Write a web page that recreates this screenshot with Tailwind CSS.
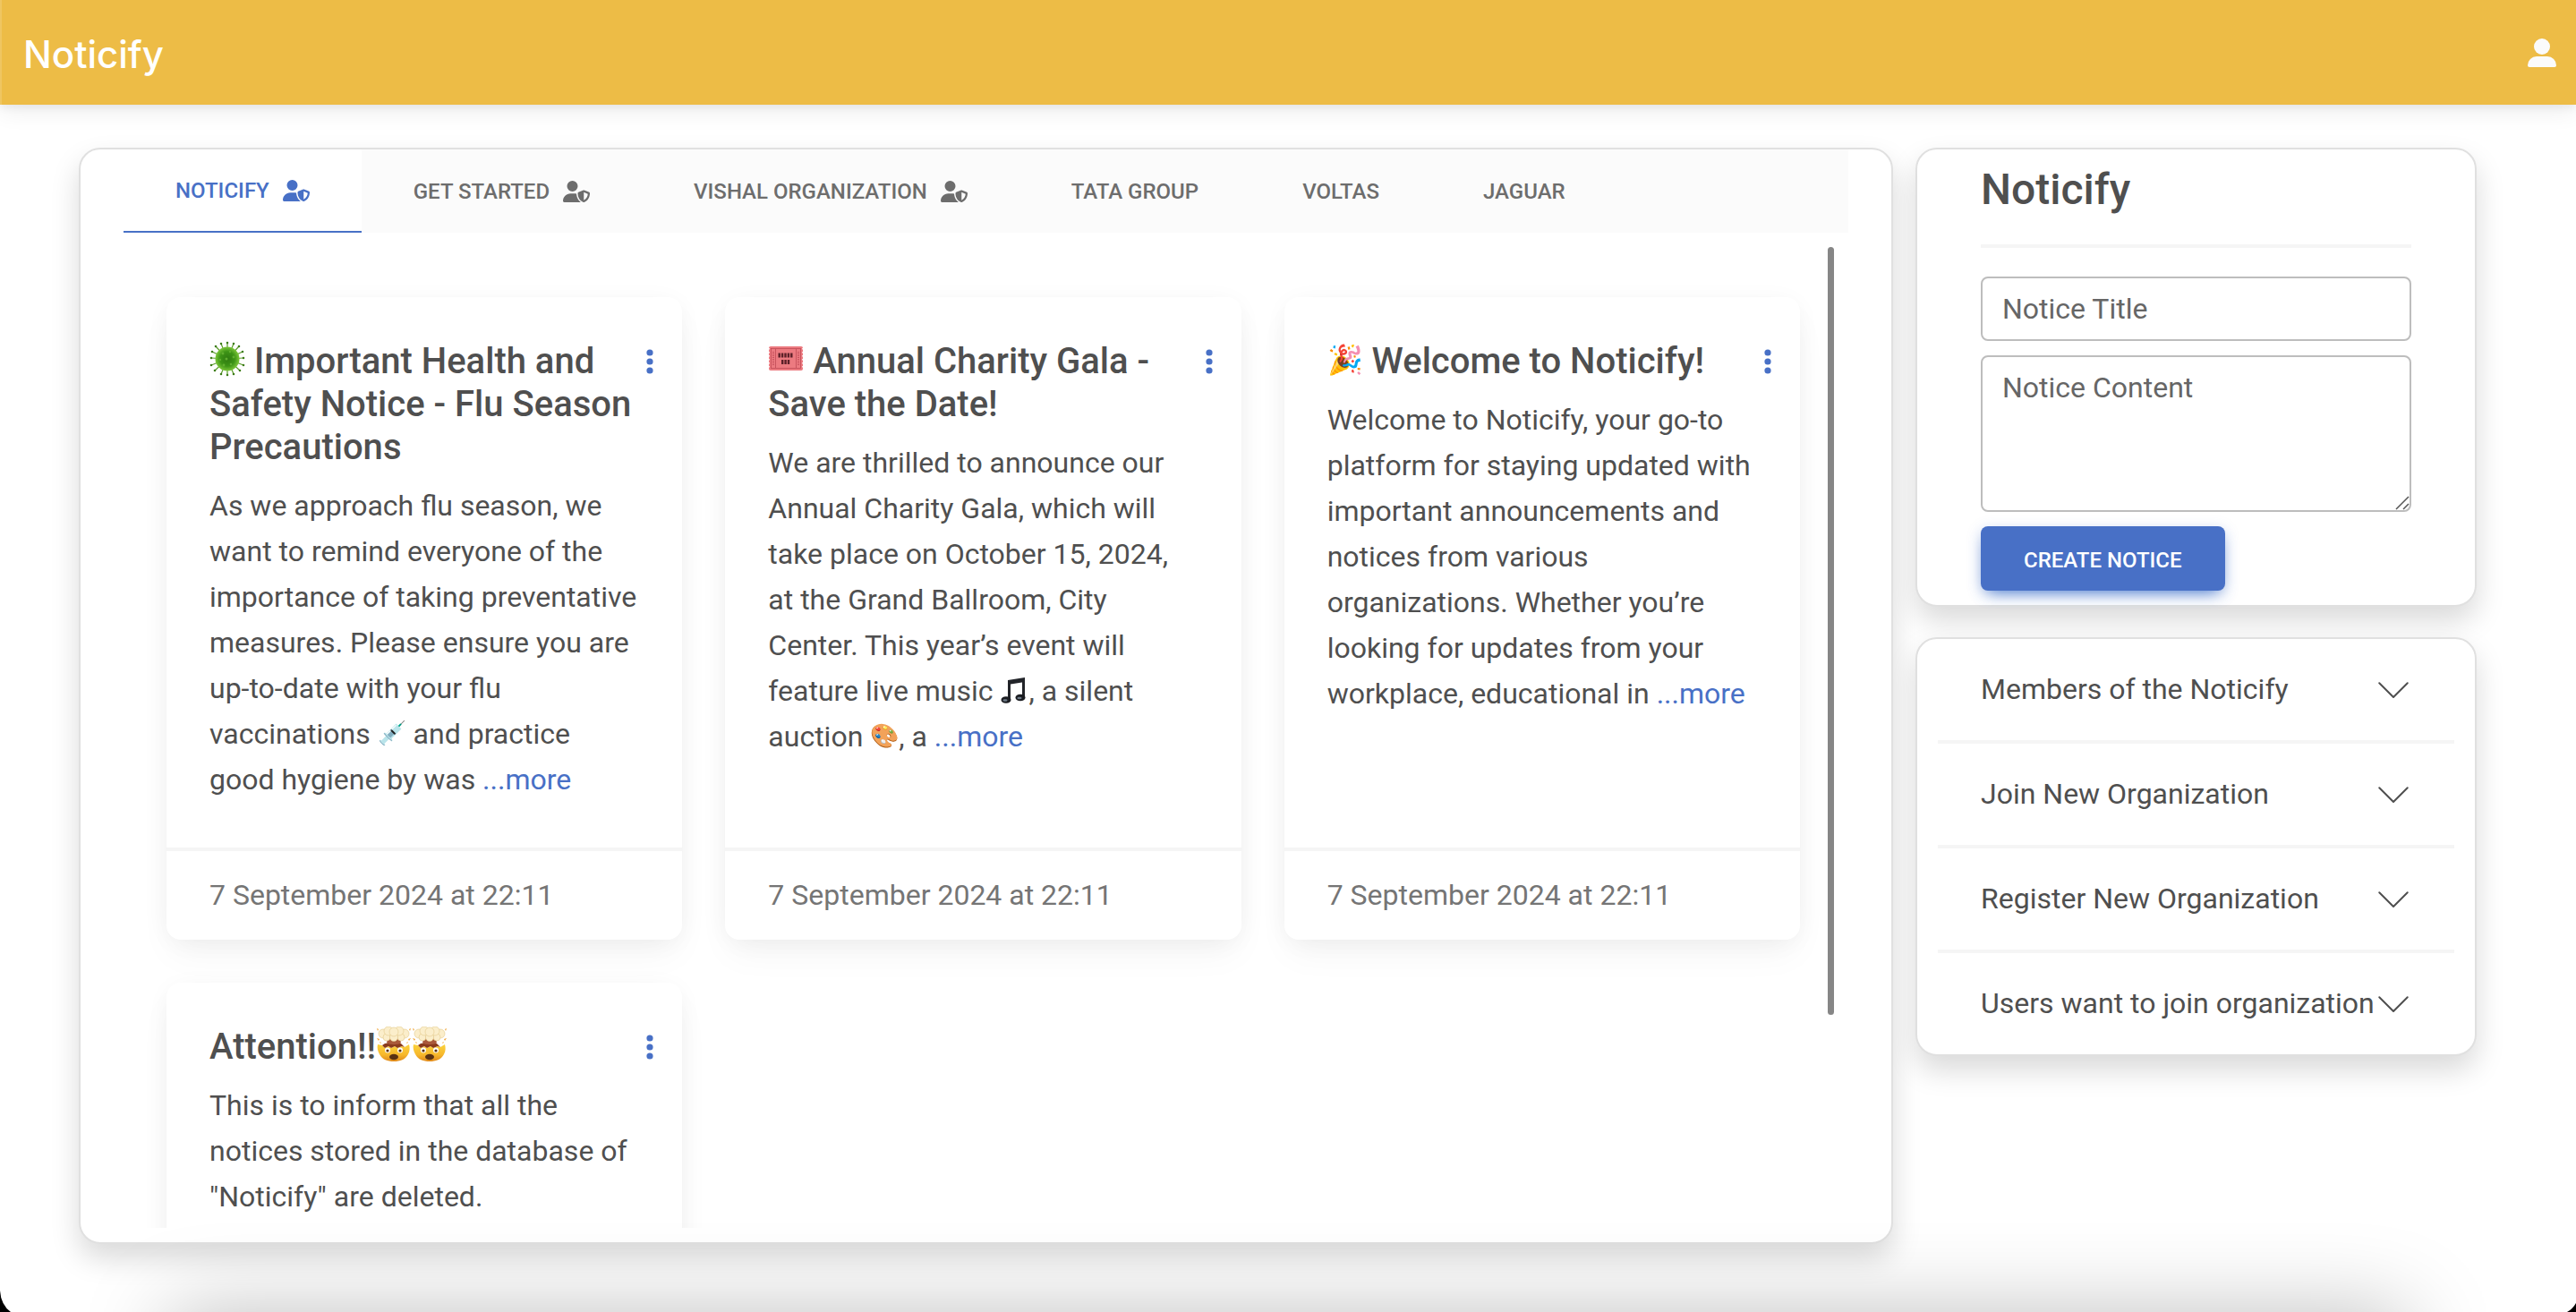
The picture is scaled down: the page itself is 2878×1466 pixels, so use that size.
<!DOCTYPE html>
<html lang="en">
<head>
<meta charset="utf-8">
<meta name="viewport" content="width=device-width, initial-scale=1">
<title>Noticify</title>
<script src="https://cdn.jsdelivr.net/npm/@tailwindcss/browser@4"></script>
</head>
<body class="relative min-h-screen overflow-hidden bg-white font-[Roboto,sans-serif] text-[32px] text-[#4f4f4f]">

<!-- Shared icons -->
<svg class="absolute size-0" aria-hidden="true">
  <defs>
    <radialGradient id="germ"><stop offset="0" stop-color="#2f7a10"/><stop offset=".6" stop-color="#3d9416"/><stop offset="1" stop-color="#7cc63a"/></radialGradient>
    <linearGradient id="face" x1="0" y1="0" x2="0" y2="1"><stop offset="0" stop-color="#fbd23c"/><stop offset=".6" stop-color="#f7b82c"/><stop offset="1" stop-color="#e08a1c"/></linearGradient>
  </defs>
  <symbol id="user-shield" viewBox="0 0 640 512">
    <path fill="currentColor" d="M224 256A128 128 0 1 0 224 0a128 128 0 1 0 0 256zm-45.700 48C79.800 304 0 383.800 0 482.300C0 498.700 13.300 512 29.700 512l388.600 0c1.800 0 3.500-.2 5.300-.5c-76.300-55.100-99.800-141-103.100-200.200c-16.100-4.800-33.100-7.300-50.700-7.300l-91.400 0zm308.800-78.300l-120 48C358 277.400 352 286.200 352 296c0 63.300 25.900 168.800 134.800 214.200c5.900 2.500 12.600 2.500 18.500 0C614.100 464.800 640 359.300 640 296c0-9.800-6-18.600-15.100-22.300l-120-48c-5.700-2.300-12.100-2.300-17.800 0zM591.400 312c-3.900 50.700-27.200 116.700-95.400 149.700l0-187.800L591.400 312z"/>
  </symbol>
  <symbol id="dots" viewBox="0 0 8 28">
    <g fill="currentColor"><circle cx="4" cy="4" r="3.600"/><circle cx="4" cy="14" r="3.600"/><circle cx="4" cy="24" r="3.600"/></g>
  </symbol>
  <symbol id="chevron" viewBox="0 0 16 16">
    <path d="M1.700 4.900 8 11.200l6.300-6.300" fill="none" stroke="currentColor" stroke-width=".8" stroke-linecap="round" stroke-linejoin="round"/>
  </symbol>
  <symbol id="mind-blown" viewBox="0 0 40 40">
    <g fill="#f0a63a"><path d="M1 2l2 1-1 2zM5 8l2 2-2 1zM1 13l3 1-1 2zM39 2l-2 1 1 2zM35 8l-2 2 2 1zM39 13l-3 1 1 2zM4 17l2 1-1 1zM36 17l-2 1 1 1z"/></g>
    <path d="M2 20l5 1 3 3 4-2 3 2 4-2 3 2 5-2 3 1 5-3c1 4 1 7-1 11-3 6-9 8-16 8S7 37 4 31c-2-4-3-7-2-11z" fill="url(#face)"/>
    <path d="M7 21l3 3 4-2 3 2 4-2 3 2 5-2 3 1-4-4-6-1h-6l-6 1z" fill="#8a3a1c"/>
    <path d="M14 11h12l2 7c-2 3-14 3-16 0z" fill="#a9583a"/>
    <g fill="#fbeecb" stroke="#e3c98b" stroke-width=".6"><circle cx="8" cy="8" r="5"/><circle cx="32" cy="8" r="5"/><circle cx="12" cy="12" r="4"/><circle cx="28" cy="12" r="4"/><circle cx="20" cy="12" r="4.500"/><circle cx="14" cy="5" r="5"/><circle cx="26" cy="5" r="5"/><circle cx="20" cy="6" r="5"/></g>
    <g fill="#fff"><ellipse cx="13" cy="26.500" rx="3" ry="3"/><ellipse cx="27" cy="26.500" rx="3" ry="3"/></g>
    <g fill="#5a3213"><circle cx="13" cy="27" r="1.600"/><circle cx="27" cy="27" r="1.600"/><ellipse cx="20" cy="34" rx="5" ry="3.200"/></g>
  </symbol>
</svg>

<nav class="flex h-[117px] items-center justify-between border-l-2 border-[#efc661] bg-[#edbc46] pr-[22px] pl-6 shadow-[0_8px_24px_0_rgba(0,0,0,0.07),0_4px_8px_0_rgba(0,0,0,0.05)]">
  <a href="#" class="pt-1 font-[Inter,sans-serif] text-[42px] leading-[58px] font-medium text-white">Noticify</a>
  <button type="button" aria-label="Account" class="text-[#fbfbfb]">
    <svg class="block size-8" viewBox="0 0 32 32" fill="currentColor"><circle cx="16" cy="9" r="9"/><path d="M10 20h12a10 10 0 0 1 10 10 2 2 0 0 1-2 2H2a2 2 0 0 1-2-2 10 10 0 0 1 10-10z"/></svg>
  </button>
</nav>

<div class="flex items-start gap-[25px] pt-12 pr-[111px] pl-[88px]">

  <main class="relative min-w-0 flex-1 rounded-3xl border-2 border-[#e0e0e0] bg-white px-12 pb-4 shadow-[0_16px_32px_rgba(0,0,0,0.15)]">
    <div role="tablist" class="flex h-[93px] bg-[#fbfbfb] text-[24px] font-medium text-[#6d6d6d]">
      <button role="tab" aria-selected="true" type="button" class="flex items-center gap-[15px] border-b-2 border-[#4870c6] bg-white px-[58px] text-[#4870c6]">NOTICIFY <svg class="h-6 w-[30px]"><use href="#user-shield"/></svg></button>
      <button role="tab" type="button" class="flex items-center gap-[15px] px-[58px]">GET STARTED <svg class="h-6 w-[30px]"><use href="#user-shield"/></svg></button>
      <button role="tab" type="button" class="flex items-center gap-[15px] px-[58px]">VISHAL ORGANIZATION <svg class="h-6 w-[30px]"><use href="#user-shield"/></svg></button>
      <button role="tab" type="button" class="px-[58px]">TATA GROUP</button>
      <button role="tab" type="button" class="px-[58px]">VOLTAS</button>
      <button role="tab" type="button" class="px-[58px]">JAGUAR</button>
    </div>

    <div class="grid h-[calc(100vh-354px)] auto-rows-max grid-cols-3 gap-12 overflow-y-auto pt-[72px] pr-[54px] pl-12 [scrollbar-width:none]">

      <article class="relative flex flex-col rounded-2xl bg-white shadow-[0_4px_30px_-6px_rgba(0,0,0,0.07),0_20px_40px_-4px_rgba(0,0,0,0.04)]">
        <div class="flex-1 px-12 pt-12 pb-[50px]">
          <h2 class="text-[40px] leading-[48px] font-medium"><svg class="inline-block size-10 align-[-4px]" viewBox="0 0 40 40" role="img" aria-label="🦠">
              <path stroke="#5c9c2c" stroke-width="1.200" stroke-linecap="round" fill="none" d="M20 20V2M20 20l7-17M20 20l13-14M20 20l17-8M20 20l18-1M20 20l18 7M20 20l14 13M20 20l7 17M20 20v18M20 20l-7 17M20 20L6 33M20 20L2 27M20 20L2 19M20 20L3 12M20 20L7 6M20 20L13 3"/>
              <path stroke="#3f7d1a" stroke-width="2.600" stroke-linecap="round" d="M20 2h0M27 3h0M33 6h0M37 12h0M38 19h0M38 27h0M34 33h0M27 37h0M20 38h0M13 37h0M6 33h0M2 27h0M2 19h0M3 12h0M7 6h0M13 3h0"/>
              <circle cx="20" cy="20" r="13.500" fill="url(#germ)"/>
              <g fill="#5fae2f"><circle cx="15" cy="14" r="1.400"/><circle cx="23" cy="12" r="1.200"/><circle cx="27" cy="18" r="1.400"/><circle cx="19" cy="20" r="1.500"/><circle cx="12" cy="21" r="1.200"/><circle cx="16" cy="27" r="1.400"/><circle cx="24" cy="26" r="1.300"/></g>
            </svg> Important Health and Safety Notice - Flu Season Precautions</h2>
          <p class="mt-4 leading-[51px]">As we approach flu season, we want to remind everyone of the importance of taking preventative measures. Please ensure you are up-to-date with your flu vaccinations <span class="align-[3px] text-[26px] leading-none">💉</span> and practice good hygiene by was <a href="#" class="text-[#4870c6]">...more</a></p>
        </div>
        <footer class="border-t-4 border-[#f5f5f5] px-12 py-6 leading-[51px] text-[#757575]">7 September 2024 at 22:11</footer>
        <button type="button" aria-label="Notice options" class="absolute top-[58px] right-8 text-[#4870c6]"><svg class="block h-7 w-2"><use href="#dots"/></svg></button>
      </article>

      <article class="relative flex flex-col rounded-2xl bg-white shadow-[0_4px_30px_-6px_rgba(0,0,0,0.07),0_20px_40px_-4px_rgba(0,0,0,0.04)]">
        <div class="flex-1 px-12 pt-12 pb-[50px]">
          <h2 class="text-[40px] leading-[48px] font-medium"><svg class="inline-block size-10 align-[-4px]" viewBox="0 0 40 40" role="img" aria-label="🎟️">
              <rect x="1" y="6" width="38" height="27" rx="2" fill="#ec7a80"/>
              <path d="M1 8v24M39 8v24" stroke="#fff" stroke-width="1.600" stroke-dasharray="1.600 2.400"/>
              <rect x="3.500" y="8.500" width="33" height="22" fill="none" stroke="#c04a55" stroke-width=".8"/>
              <path d="M8.500 9v21M31.500 9v21" stroke="#c04a55" stroke-width=".8"/>
              <path d="M6 12v15M34 12v15" stroke="#c04a55" stroke-width="1.600" stroke-dasharray="1 1"/>
              <g stroke="#5c2028" stroke-width="5" stroke-dasharray="2.400 1"><path d="M11.500 16h17"/><path d="M15 23.500h10"/></g>
            </svg> Annual Charity Gala - Save the Date!</h2>
          <p class="mt-4 leading-[51px]">We are thrilled to announce our Annual Charity Gala, which will take place on October 15, 2024, at the Grand Ballroom, City Center. This year’s event will feature live music <svg class="inline-block size-8 align-[-4px]" viewBox="0 0 32 32" role="img" aria-label="🎵">
              <path d="M9 5 28 2v5L12 9.500V26H9z" fill="#222429"/><path d="M25 4h3v20h-3z" fill="#222429"/><ellipse cx="7" cy="27" rx="5.500" ry="3.800" fill="#1b1d22"/><ellipse cx="23" cy="24.500" rx="5.500" ry="3.800" fill="#1b1d22"/><ellipse cx="6" cy="27.500" rx="2.600" ry="1.200" fill="#6f7b88"/><ellipse cx="22" cy="25" rx="2.600" ry="1.200" fill="#6f7b88"/>
            </svg>, a silent auction <span class="align-[3px] text-[26px] leading-none">🎨</span>, a <a href="#" class="text-[#4870c6]">...more</a></p>
        </div>
        <footer class="border-t-4 border-[#f5f5f5] px-12 py-6 leading-[51px] text-[#757575]">7 September 2024 at 22:11</footer>
        <button type="button" aria-label="Notice options" class="absolute top-[58px] right-8 text-[#4870c6]"><svg class="block h-7 w-2"><use href="#dots"/></svg></button>
      </article>

      <article class="relative flex flex-col rounded-2xl bg-white shadow-[0_4px_30px_-6px_rgba(0,0,0,0.07),0_20px_40px_-4px_rgba(0,0,0,0.04)]">
        <div class="flex-1 px-12 pt-12 pb-[50px]">
          <h2 class="text-[40px] leading-[48px] font-medium"><span class="align-[4px] text-[32px] leading-none">🎉</span> Welcome to Noticify!</h2>
          <p class="mt-4 leading-[51px]">Welcome to Noticify, your go-to platform for staying updated with important announcements and notices from various organizations. Whether you’re looking for updates from your workplace, educational in <a href="#" class="text-[#4870c6]">...more</a></p>
        </div>
        <footer class="border-t-4 border-[#f5f5f5] px-12 py-6 leading-[51px] text-[#757575]">7 September 2024 at 22:11</footer>
        <button type="button" aria-label="Notice options" class="absolute top-[58px] right-8 text-[#4870c6]"><svg class="block h-7 w-2"><use href="#dots"/></svg></button>
      </article>

      <article class="relative flex flex-col rounded-2xl bg-white shadow-[0_4px_30px_-6px_rgba(0,0,0,0.07),0_20px_40px_-4px_rgba(0,0,0,0.04)]">
        <div class="flex-1 px-12 pt-12 pb-[50px]">
          <h2 class="text-[40px] leading-[48px] font-medium">Attention!!<svg class="inline-block size-10 align-[-4px]" role="img" aria-label="🤯"><use href="#mind-blown"/></svg><svg class="inline-block size-10 align-[-4px]" role="img" aria-label="🤯"><use href="#mind-blown"/></svg></h2>
          <p class="mt-4 leading-[51px]">This is to inform that all the notices stored in the database of "Noticify" are deleted.</p>
        </div>
        <button type="button" aria-label="Notice options" class="absolute top-[58px] right-8 text-[#4870c6]"><svg class="block h-7 w-2"><use href="#dots"/></svg></button>
      </article>
    </div>

    <!-- Scroll thumb over the notice list -->
    <div class="absolute top-[109px] right-16 h-[858px] w-[7px] rounded-full bg-[#868686]"></div>
  </main>

  <aside class="flex w-[627px] shrink-0 flex-col gap-[34px]">
    <section class="rounded-3xl border-2 border-[#e0e0e0] bg-white px-[71px] pt-4 pb-4 shadow-[0_16px_32px_rgba(0,0,0,0.15)]">
      <h1 class="text-[48px] leading-[58px] font-medium">Noticify</h1>
      <hr class="my-8 border-t-4 border-[#f5f5f5]">
      <form class="flex flex-col items-start gap-4">
        <div class="relative w-full">
          <input id="notice-title" type="text" class="block h-[72px] w-full rounded-lg border-2 border-[#bdbdbd] px-[22px]">
          <label for="notice-title" class="pointer-events-none absolute top-[11px] left-6 leading-[51px] text-[#666]">Notice Title</label>
        </div>
        <div class="relative w-full">
          <textarea id="notice-content" class="block h-[175px] w-full resize-none rounded-lg border-2 border-[#bdbdbd] px-[22px] py-2 leading-[51px]"></textarea>
          <label for="notice-content" class="pointer-events-none absolute top-[11px] left-6 leading-[51px] text-[#666]">Notice Content</label>
          <svg class="absolute right-[2px] bottom-[2px] size-4" viewBox="0 0 16 16" stroke="#555" stroke-width="1.500" aria-hidden="true"><path d="M1 15 15 1M9 15l6-6"/></svg>
        </div>
        <button type="button" class="h-[72px] rounded-lg bg-[#4870c6] px-12 pt-1 text-[24px] font-medium text-white shadow-[0_8px_18px_-8px_#3b71ca,0_4px_16px_0_rgba(72,112,198,0.25)]">CREATE NOTICE</button>
      </form>
    </section>

    <section class="rounded-3xl border-2 border-[#e0e0e0] bg-white px-[23px] shadow-[0_16px_32px_rgba(0,0,0,0.15)]">
      <ul class="divide-y-4 divide-[#f5f5f5] leading-[49px]">
        <li><button type="button" aria-expanded="false" class="flex w-full items-center justify-between px-12 py-8 text-left whitespace-nowrap">Members of the Noticify<svg class="size-10 shrink-0"><use href="#chevron"/></svg></button></li>
        <li><button type="button" aria-expanded="false" class="flex w-full items-center justify-between px-12 py-8 text-left whitespace-nowrap">Join New Organization<svg class="size-10 shrink-0"><use href="#chevron"/></svg></button></li>
        <li><button type="button" aria-expanded="false" class="flex w-full items-center justify-between px-12 py-8 text-left whitespace-nowrap">Register New Organization<svg class="size-10 shrink-0"><use href="#chevron"/></svg></button></li>
        <li><button type="button" aria-expanded="false" class="flex w-full items-center justify-between px-12 py-8 text-left whitespace-nowrap">Users want to join organization<svg class="size-10 shrink-0"><use href="#chevron"/></svg></button></li>
      </ul>
    </section>
  </aside>
</div>

<!-- Shadow rising from the panel below the fold -->
<div class="pointer-events-none absolute inset-0 overflow-hidden">
  <div class="absolute inset-x-[190px] top-full h-48 shadow-[0_0_96px_rgba(0,0,0,0.25)]"></div>
</div>
<!-- Rounded window corners -->
<svg class="absolute bottom-0 left-0 h-6 w-3" viewBox="0 0 12 24" aria-hidden="true"><path d="M0 0Q1 16 12 24H0z"/></svg>
<svg class="absolute right-0 bottom-0 size-[10px]" viewBox="0 0 10 10" aria-hidden="true"><path d="M10 0V10H0Q6 7 10 0z"/></svg>
</body>
</html>
